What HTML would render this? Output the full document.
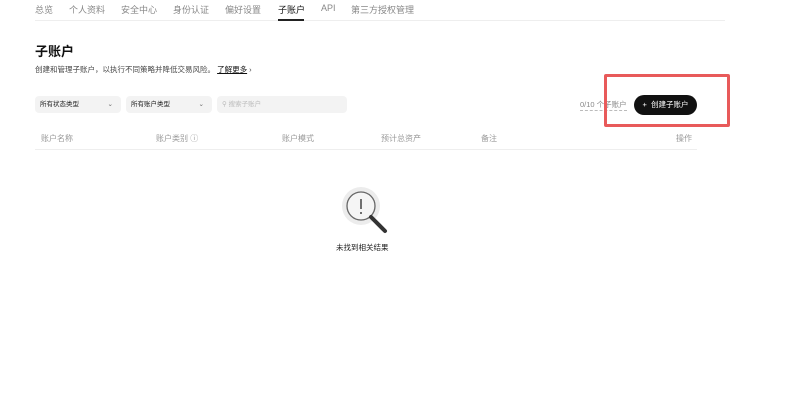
<!DOCTYPE html><html><head><style>
body{margin:0;width:800px;height:417px;background:#fff;font-family:"Liberation Sans","Noto Sans CJK SC",sans-serif;position:relative;overflow:hidden;color:#111}
.a{position:absolute;white-space:nowrap}
.nav{font-size:9px;color:#888;top:3px}
.dd{position:absolute;top:96px;height:17px;background:#f3f3f3;border-radius:4px;font-size:6.5px;color:#222;line-height:17px;box-sizing:border-box;padding-left:5px}
.th{font-size:8px;color:#999;top:133px}
</style></head><body>
<div class="a nav" style="left:35px">总览</div>
<div class="a nav" style="left:69px">个人资料</div>
<div class="a nav" style="left:121px">安全中心</div>
<div class="a nav" style="left:173px">身份认证</div>
<div class="a nav" style="left:225px">偏好设置</div>
<div class="a nav" style="left:278px;color:#111">子账户</div>
<div class="a nav" style="left:321px">API</div>
<div class="a nav" style="left:351px">第三方授权管理</div>
<div class="a" style="left:35px;top:20px;width:690px;height:1px;background:#eee"></div>
<div class="a" style="left:278px;top:19px;width:26px;height:2px;background:#222"></div>
<div class="a" style="left:35px;top:41px;font-size:13px;font-weight:bold">子账户</div>
<div class="a" style="left:35px;top:64px;font-size:7.5px;color:#444">创建和管理子账户，以执行不同策略并降低交易风险。 <span style="text-decoration:underline;color:#111">了解更多</span> ›</div>
<div class="dd" style="left:35px;width:86px">所有状态类型<span style="position:absolute;right:8px;color:#666">⌄</span></div>
<div class="dd" style="left:126px;width:86px">所有账户类型<span style="position:absolute;right:8px;color:#666">⌄</span></div>
<div class="dd" style="left:217px;width:130px;color:#bbb">⚲ 搜索子账户</div>
<div class="a" style="left:580px;top:99px;font-size:7.5px;color:#888;border-bottom:1px dashed #bbb">0/10 个子账户</div>
<div class="a" style="left:634px;top:95px;width:63px;height:20px;background:#111;border-radius:10px;color:#fff;font-size:7.5px;line-height:20px;text-align:center">+&nbsp; 创建子账户</div>
<div class="a" style="left:604px;top:74px;width:120px;height:47px;border:3px solid #e85a5a;border-radius:2px"></div>
<div class="a th" style="left:41px">账户名称</div>
<div class="a th" style="left:156px">账户类别 ⓘ</div>
<div class="a th" style="left:282px">账户模式</div>
<div class="a th" style="left:381px">预计总资产</div>
<div class="a th" style="left:481px">备注</div>
<div class="a th" style="left:676px">操作</div>
<div class="a" style="left:35px;top:149px;width:662px;height:1px;background:#eee"></div>
<svg class="a" style="left:340px;top:186px" width="55" height="52" viewBox="0 0 55 52">
<circle cx="21" cy="20" r="19" fill="#ececec"/>
<circle cx="21" cy="20" r="14" fill="#f5f5f5" stroke="#666" stroke-width="1.3"/>
<line x1="31" y1="31" x2="45" y2="45" stroke="#333" stroke-width="4" stroke-linecap="round"/>
<line x1="21" y1="13" x2="21" y2="23" stroke="#444" stroke-width="1.5"/>
<circle cx="21" cy="27" r="1" fill="#444"/>
</svg>
<div class="a" style="left:336px;top:242px;font-size:7.5px;color:#222">未找到相关结果</div>
</body></html>
